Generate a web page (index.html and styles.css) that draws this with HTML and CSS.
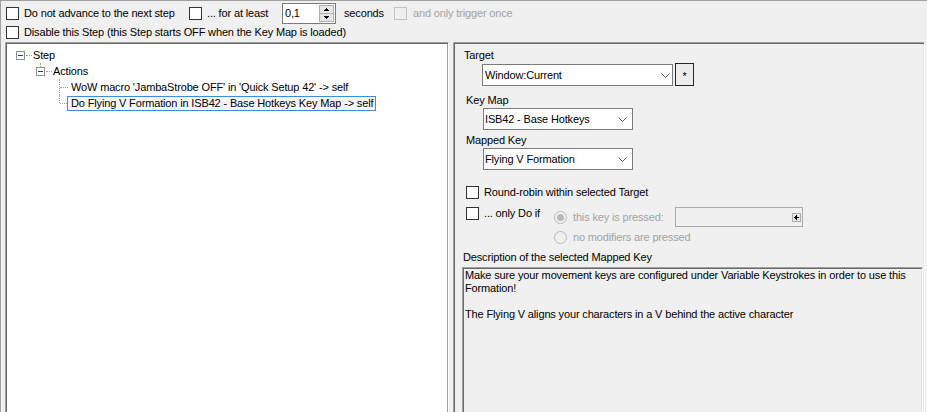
FILE: index.html
```html
<!DOCTYPE html>
<html>
<head>
<meta charset="utf-8">
<link rel="stylesheet" href="styles.css">
</head>
<body>
<div class="window">
  <div class="opt-row row1">
    <span class="chk"></span><span class="lbl w-adv">Do not advance to the next step</span>
    <span class="chk"></span><span class="lbl w-least">... for at least</span>
    <div class="spin">
      <span class="spin-val">0,1</span>
      <div class="spin-btns">
        <span class="sb sb-up"><svg width="5" height="3" viewBox="0 0 5 3" shape-rendering="crispEdges"><rect x="2" y="0" width="1" height="1" fill="#000"/><rect x="1" y="1" width="3" height="1" fill="#000"/><rect x="0" y="2" width="5" height="1" fill="#000"/></svg></span>
        <span class="sb sb-dn"><svg width="5" height="3" viewBox="0 0 5 3" shape-rendering="crispEdges"><rect x="0" y="0" width="5" height="1" fill="#000"/><rect x="1" y="1" width="3" height="1" fill="#000"/><rect x="2" y="2" width="1" height="1" fill="#000"/></svg></span>
      </div>
    </div>
    <span class="lbl w-sec">seconds</span>
    <span class="chk chk-dis"></span><span class="lbl lbl-dis">and only trigger once</span>
  </div>
  <div class="opt-row row2">
    <span class="chk"></span><span class="lbl">Disable this Step (this Step starts OFF when the Key Map is loaded)</span>
  </div>

  <div class="panels">
    <div class="tree">
      <div class="node lvl0"><span class="exp"></span><span class="hdots"></span><span class="txt">Step</span></div>
      <div class="node lvl1"><span class="exp exp-child"></span><span class="hdots"></span><span class="txt">Actions</span></div>
      <div class="node lvl2"><span class="branch"></span><span class="txt leaf">WoW macro 'JambaStrobe OFF' in 'Quick Setup 42' -&gt; self</span></div>
      <div class="node lvl2"><span class="branch branch-last"></span><span class="txt sel">Do Flying V Formation in ISB42 - Base Hotkeys Key Map -&gt; self</span></div>
    </div>

    <div class="detail">
      <div class="f-label lbl-target">Target</div>
      <div class="target-row">
        <div class="combo combo-target"><span class="combo-text">Window:Current</span><svg class="chev" width="9" height="5" viewBox="0 0 9 5"><polyline points="0.5,0.5 4.5,4.5 8.5,0.5" fill="none" stroke="#606060" stroke-width="1"/></svg></div>
        <div class="star-btn">*</div>
      </div>
      <div class="f-label lbl-sub">Key Map</div>
      <div class="combo combo-key"><span class="combo-text">ISB42 - Base Hotkeys</span><svg class="chev" width="9" height="5" viewBox="0 0 9 5"><polyline points="0.5,0.5 4.5,4.5 8.5,0.5" fill="none" stroke="#606060" stroke-width="1"/></svg></div>
      <div class="f-label lbl-sub lbl-mapped">Mapped Key</div>
      <div class="combo combo-key"><span class="combo-text">Flying V Formation</span><svg class="chev" width="9" height="5" viewBox="0 0 9 5"><polyline points="0.5,0.5 4.5,4.5 8.5,0.5" fill="none" stroke="#606060" stroke-width="1"/></svg></div>

      <div class="chk-row rr"><span class="chk"></span><span class="lbl">Round-robin within selected Target</span></div>

      <div class="onlydo">
        <div class="chk-row od"><span class="chk"></span><span class="lbl">... only Do if</span></div>
        <div class="radios">
          <div class="radio-row r1">
            <span class="radio radio-on"></span><span class="rlbl w-key">this key is pressed:</span>
            <div class="hotkey"><span class="hk-btn"><svg width="5" height="5" viewBox="0 0 5 5" shape-rendering="crispEdges"><rect x="2" y="0" width="1" height="1" fill="#000"/><rect x="1" y="1" width="2" height="1" fill="#000"/><rect x="0" y="2" width="5" height="1" fill="#000"/><rect x="1" y="3" width="2" height="1" fill="#000"/><rect x="2" y="4" width="1" height="1" fill="#000"/></svg></span></div>
          </div>
          <div class="radio-row r2"><span class="radio"></span><span class="rlbl">no modifiers are pressed</span></div>
        </div>
      </div>

      <div class="f-label lbl-desc">Description of the selected Mapped Key</div>
      <div class="desc">Make sure your movement keys are configured under Variable Keystrokes in order to use this<br>Formation!<br><br>The Flying V aligns your characters in a V behind the active character</div>
    </div>
  </div>
</div>
</body>
</html>
```

FILE: styles.css
```css
* { box-sizing: border-box; }
html, body { margin: 0; padding: 0; }
body {
  background: #f0f0f0;
  font-family: "Liberation Sans", Arial, sans-serif;
  font-size: 11px;
  line-height: 13px;
  letter-spacing: -0.15px;
  color: #000;
}
.window {
  width: 927px;
  height: 412px;
  overflow: hidden;
  border-top: 1px solid #a0a0a0;
  border-left: 1px solid #a0a0a0;
}

/* option rows */
.opt-row { display: flex; align-items: center; padding-left: 5px; white-space: nowrap; }
.row1 { margin-top: 1px; height: 22px; }
.row2 { height: 16px; }
.chk {
  flex: none;
  width: 13px; height: 13px;
  border: 1px solid #333;
  background: #fff;
}
.chk-dis { border-color: #c4c4c4; background: #f0f0f0; }
.lbl { margin-left: 5px; white-space: nowrap; }
.lbl-dis { margin-left: 6px; color: #a3a3a3; }
.w-adv { width: 165px; flex: none; }
.w-least { width: 75px; flex: none; }
.w-sec { margin-left: 8px; width: 50px; flex: none; }

.spin {
  flex: none;
  width: 54px; height: 21px;
  border: 1px solid #7a7a7a;
  background: #fff;
  display: flex;
  align-items: center;
  justify-content: space-between;
  padding: 1px 1px 1px 2px;
}
.spin-val { line-height: 13px; }
.spin-btns { display: flex; flex-direction: column; width: 15px; height: 17px; }
.sb {
  display: flex; align-items: center; justify-content: center;
  border: 1px solid #adadad;
  background: #e6e6e6;
}
.sb svg { display: block; }
.sb-up { height: 9px; }
.sb-dn { height: 8px; border-top: none; }

/* panels */
.panels {
  display: flex;
  gap: 4px;
  margin-left: 4px;
  margin-top: 2px;
  height: 380px;
}
.tree {
  flex: none;
  width: 444px;
  height: 100%;
  background: #fff;
  border: 1px solid;
  border-color: #a0a0a0 #fff #fff #a0a0a0;
  box-shadow: inset 1px 1px 0 #696969, inset -1px -1px 0 #a0a0a0;
  padding: 4px 0 0 1px;
}
.node { display: flex; align-items: center; height: 16px; white-space: nowrap; }
.lvl0 { padding-left: 9px; }
.lvl1 { padding-left: 29px; }
.lvl2 { padding-left: 52px; }
.exp {
  flex: none;
  position: relative;
  width: 9px; height: 9px;
  border: 1px solid #919191;
  background: #fff;
}
.exp::after {
  content: "";
  position: absolute;
  left: 1px; top: 3px;
  width: 5px; height: 1px;
  background: #1e3f91;
}
.exp-child::before {
  content: "";
  position: absolute;
  left: 3px; top: -5px;
  height: 4px;
  border-left: 1px dotted #a0a0a0;
}
.hdots { flex: none; width: 6px; height: 1px; margin-left: 1px; border-top: 1px dotted #a0a0a0; }
.txt { margin-left: 1px; }
.branch { flex: none; position: relative; width: 9px; height: 16px; }
.branch::before {
  content: "";
  position: absolute;
  left: 0; top: 0; bottom: 0;
  border-left: 1px dotted #a0a0a0;
}
.branch::after {
  content: "";
  position: absolute;
  left: 1px; top: 8px;
  width: 8px;
  border-top: 1px dotted #a0a0a0;
}
.branch-last { width: 8px; }
.branch-last::before { bottom: 8px; }
.branch-last::after { width: 7px; }
.leaf { margin-left: 3px; }
.sel {
  margin-left: 0;
  align-self: flex-start;
  margin-top: 1px;
  height: 15px;
  border: 1px solid #3a8ee0;
  background: #f7f7f7;
  padding: 0 2px 0 3px;
}

.detail {
  flex: none;
  width: 472px;
  height: 100%;
  border: 1px solid;
  border-color: #a0a0a0 #fff #fff #a0a0a0;
  box-shadow: inset 1px 1px 0 #696969, inset -1px -1px 0 #e3e3e3;
  padding: 1px 0 0 1px;
  display: flex;
  flex-direction: column;
  align-items: flex-start;
}
.detail > * { flex: none; }
.f-label { height: 14px; line-height: 14px; white-space: nowrap; }
.lbl-target { margin-top: 4px; padding-left: 9px; }
.lbl-sub { margin-top: 7px; padding-left: 11px; }
.lbl-mapped { margin-top: 3px; }
.target-row { display: flex; align-items: flex-start; margin-top: 1px; height: 23px; padding-left: 27px; }
.combo {
  display: flex;
  align-items: center;
  justify-content: space-between;
  height: 22px;
  border: 1px solid #7a7a7a;
  background: #fff;
  white-space: nowrap;
}
.combo .chev { display: block; flex: none; }
.combo-target { width: 191px; margin-top: 1px; padding: 0 2px 0 2px; }
.combo-key { width: 150px; margin-top: 1px; margin-left: 28px; padding: 0 5px 0 1px; }
.star-btn {
  margin-left: 2px;
  width: 19px; height: 23px;
  border: 1px solid #262626;
  background: #ececec;
  display: flex; align-items: center; justify-content: center;
  padding-top: 3px;
}

.chk-row { display: flex; align-items: center; height: 14px; white-space: nowrap; }
.rr { margin-top: 15px; padding-left: 11px; }
.onlydo { display: flex; align-items: flex-start; margin-top: 7px; padding-left: 11px; }
.od { width: 88px; flex: none; }
.radios { display: flex; flex-direction: column; }
.radio-row { display: flex; align-items: center; white-space: nowrap; flex: none; }
.r1 { margin-top: 1px; height: 20px; }
.r2 { margin-top: 3px; height: 15px; }
.radio {
  flex: none;
  position: relative;
  width: 13px; height: 13px;
  border-radius: 50%;
  border: 1px solid #bcbcbc;
  background: #f0f0f0;
}
.radio-on::after {
  content: "";
  position: absolute;
  left: 2px; top: 2px;
  width: 7px; height: 7px;
  border-radius: 50%;
  background: #b8b8b8;
}
.rlbl { margin-left: 6px; color: #a3a3a3; }
.w-key { width: 102px; flex: none; }
.hotkey {
  flex: none;
  width: 128px; height: 20px;
  border: 1px solid #a9a9a9;
  background: #f0f0f0;
  display: flex;
  align-items: center;
  justify-content: flex-end;
  padding-right: 1px;
}
.hk-btn {
  width: 9px; height: 9px;
  border: 1px solid #adadad;
  background: #e6e6e6;
  display: flex; align-items: center; justify-content: center;
}
.hk-btn svg { display: block; }

.lbl-desc { margin-top: 5px; padding-left: 8px; }
.desc {
  margin-top: 3px;
  margin-left: 7px;
  width: 461px;
  height: 200px;
  border: 1px solid;
  border-color: #a0a0a0 #fff #fff #a0a0a0;
  box-shadow: inset 1px 1px 0 #696969, inset -1px -1px 0 #e3e3e3;
  background: #f0f0f0;
  padding: 1px 0 0 2px;
  white-space: nowrap;
}
```
